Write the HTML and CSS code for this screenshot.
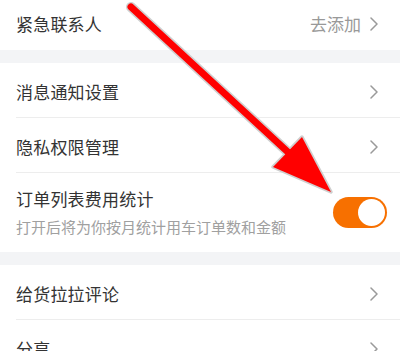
FILE: index.html
```html
<!DOCTYPE html>
<html lang="zh">
<head>
<meta charset="utf-8">
<link rel="stylesheet" href="styles.css">
</head>
<body>
<div class="page">
  <section class="group group-first">
    <div class="row">
      <span class="label">紧急联系人</span>
      <span class="right"><span class="value">去添加</span><svg class="chev" viewBox="0 0 8 14" width="8" height="14"><path d="M1 1 L7 7 L1 13" fill="none" stroke="#9a9a9a" stroke-width="1.5" stroke-linecap="round" stroke-linejoin="round"/></svg></span>
    </div>
  </section>
  <div class="band"></div>
  <section class="group">
    <div class="row line">
      <span class="label">消息通知设置</span>
      <svg class="chev" viewBox="0 0 8 14" width="8" height="14"><path d="M1 1 L7 7 L1 13" fill="none" stroke="#9a9a9a" stroke-width="1.5" stroke-linecap="round" stroke-linejoin="round"/></svg>
    </div>
    <div class="row line">
      <span class="label">隐私权限管理</span>
      <svg class="chev" viewBox="0 0 8 14" width="8" height="14"><path d="M1 1 L7 7 L1 13" fill="none" stroke="#9a9a9a" stroke-width="1.5" stroke-linecap="round" stroke-linejoin="round"/></svg>
    </div>
    <div class="row row-tall">
      <div class="stack">
        <span class="label">订单列表费用统计</span>
        <span class="sub">打开后将为你按月统计用车订单数和金额</span>
      </div>
      <span class="toggle"><span class="knob"></span></span>
    </div>
  </section>
  <div class="band"></div>
  <section class="group">
    <div class="row line">
      <span class="label">给货拉拉评论</span>
      <svg class="chev" viewBox="0 0 8 14" width="8" height="14"><path d="M1 1 L7 7 L1 13" fill="none" stroke="#9a9a9a" stroke-width="1.5" stroke-linecap="round" stroke-linejoin="round"/></svg>
    </div>
    <div class="row">
      <span class="label">分享</span>
      <svg class="chev" viewBox="0 0 8 14" width="8" height="14"><path d="M1 1 L7 7 L1 13" fill="none" stroke="#9a9a9a" stroke-width="1.5" stroke-linecap="round" stroke-linejoin="round"/></svg>
    </div>
  </section>
  <svg class="arrow" viewBox="0 0 400 351" width="400" height="351">
    <g stroke="#cfcfcf" stroke-linejoin="round" stroke-linecap="round">
      <line x1="131" y1="7" x2="290" y2="154" stroke-width="10"/>
      <polygon points="302,137 331,192 273,167" fill="#cfcfcf" stroke-width="3.5"/>
    </g>
    <line x1="131" y1="7" x2="290" y2="154" stroke="#ff0000" stroke-width="7" stroke-linecap="round"/>
    <polygon points="302,137 331,192 273,167" fill="#ff0000"/>
  </svg>
</div>
</body>
</html>
```

FILE: styles.css
```css
html, body {
  margin: 0;
  padding: 0;
  background: #ffffff;
}
body {
  width: 400px;
  height: 351px;
  overflow: hidden;
  font-family: "Noto Sans CJK SC", "Noto Sans", sans-serif;
}
.page {
  position: relative;
  width: 400px;
  height: 351px;
  overflow: hidden;
}
.group {
  background: #fff;
}
.group-first {
  margin-top: -5px;
}
.band {
  height: 13px;
  background: #f3f4f6;
}
.row {
  display: flex;
  align-items: center;
  justify-content: space-between;
  height: 55px;
  box-sizing: border-box;
  margin-left: 16px;
  padding-right: 22px;
  padding-top: 3px;
}
.line {
  border-bottom: 1px solid #ededed;
}
.label {
  font-size: 17px;
  color: #333;
  line-height: 24px;
  letter-spacing: 0.2px;
}
.right {
  display: flex;
  align-items: center;
  gap: 9px;
}
.value {
  font-size: 17px;
  color: #999;
  line-height: 24px;
}
.chev {
  display: block;
  flex: none;
}
.row-tall {
  height: 79px;
  padding-top: 0;
  padding-right: 13px;
}
.stack {
  display: flex;
  flex-direction: column;
  gap: 5px;
  padding-bottom: 1px;
}
.sub {
  font-size: 15px;
  color: #a0a0a0;
  line-height: 22px;
}
.toggle {
  display: flex;
  align-items: center;
  justify-content: flex-end;
  width: 54px;
  height: 31px;
  box-sizing: border-box;
  padding: 2px;
  border-radius: 16px;
  background: #f77000;
}
.knob {
  width: 27px;
  height: 27px;
  border-radius: 50%;
  background: #fff;
}
.arrow {
  position: absolute;
  left: 0;
  top: 0;
  pointer-events: none;
}
```
